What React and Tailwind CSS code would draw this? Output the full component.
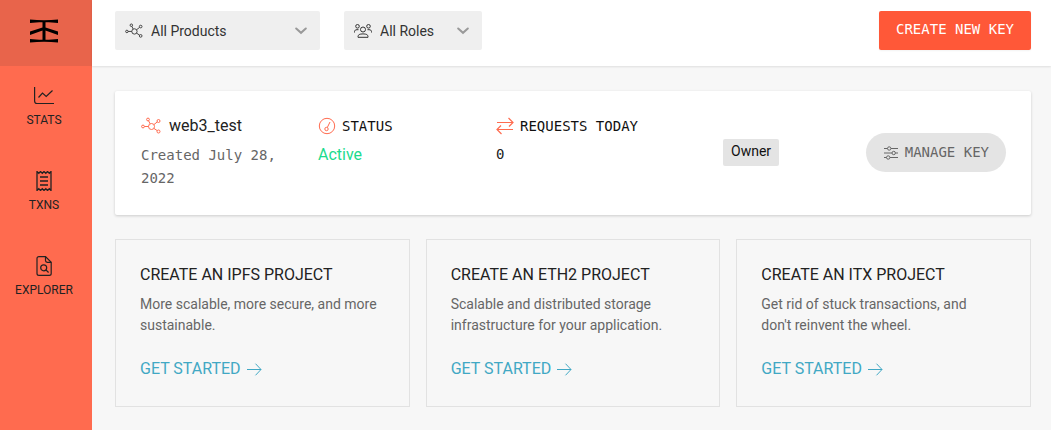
import { clsx } from "clsx";

const sans = "font-[Roboto,'Liberation_Sans',sans-serif]";
const mono = "font-['DejaVu_Sans_Mono','Liberation_Mono',monospace]";

function NetworkIcon({ className }) {
  return <svg className={className} viewBox="0 0 20 18" fill="none" stroke="currentColor" aria-hidden="true">
    <circle cx="10.5" cy="9.5" r="3"/>
    <circle cx="2" cy="9.5" r="1.4"/>
    <circle cx="7" cy="2.5" r="1.4"/>
    <circle cx="17.5" cy="4" r="1.5"/>
    <circle cx="17.5" cy="14.5" r="1.5"/>
    <path d="M3.4 9.5h4.1M7.6 3.8l1.5 3M12.9 7.6l3.3-2.6M12.9 11.4l3.3 2.2"/>
  </svg>;
}

function PeopleIcon({ className }) {
  return <svg className={className} viewBox="0 0 18 14" fill="none" stroke="currentColor" aria-hidden="true">
    <circle cx="3.5" cy="2.3" r="1.8"/>
    <circle cx="14.5" cy="2.3" r="1.8"/>
    <circle cx="9" cy="5.5" r="2.5"/>
    <path d="M.5 8.5V7.6C.5 6.4 1.5 5.7 3 5.7h1.5M17.5 8.5V7.6c0-1.2-1-1.9-2.5-1.9h-1.5M4 13.3v-.8c0-1.700 1.500-2.600 5-2.600s5 .9 5 2.600v.8z"/>
  </svg>;
}

function GaugeIcon({ className }) {
  return <svg className={className} viewBox="0 0 18 18" fill="none" stroke="currentColor" aria-hidden="true">
    <circle cx="9" cy="9" r="7.7"/>
    <circle cx="8.5" cy="12" r="1.7"/>
    <path d="M9.3 10.5L12 5"/>
  </svg>;
}

function SwapIcon({ className }) {
  return <svg className={className} viewBox="0 0 18 18" fill="none" stroke="currentColor" strokeWidth="1.2" aria-hidden="true">
    <path d="M1 5.5h16M12.5 1l4.5 4.500-4 4M17 12.500H1M5 8.500l-4 4L5.500 17"/>
  </svg>;
}

function SlidersIcon({ className }) {
  return <svg className={className} viewBox="0 0 16 14" fill="none" stroke="currentColor" aria-hidden="true">
    <path d="M1 2.500h3.500M8 2.500h7M1 7h8M12.500 7H15M1 11.500h2.500M7 11.500h8"/>
    <circle cx="6.2" cy="2.5" r="1.7"/>
    <circle cx="10.7" cy="7" r="1.7"/>
    <circle cx="5.2" cy="11.5" r="1.7"/>
  </svg>;
}

function ArrowIcon({ className }) {
  return <svg className={className} viewBox="0 0 15 13" fill="none" stroke="currentColor" aria-hidden="true">
    <path d="M0 6.500h14M8.500.7l5.500 5.800-5.500 5.800"/>
  </svg>;
}

function ChevronIcon({ className }) {
  return <svg className={className} viewBox="0 0 12 8" fill="none" stroke="currentColor" strokeWidth="2" strokeLinecap="round" aria-hidden="true">
    <path d="M1.200 1.500L6 5.800l4.800-4.300"/>
  </svg>;
}

function StatsIcon() {
  return <svg className="h-5 w-5" viewBox="0 0 20 20" fill="none" stroke="currentColor" strokeWidth="1.2" aria-hidden="true">
    <path d="M.6 1v14c0 1.700.8 2.500 2.400 2.500h17"/>
    <path d="M4.500 11.500l4-4.500 3.700 3.500 6.300-6"/>
  </svg>;
}

function ReceiptIcon() {
  return <svg className="h-5 w-5" viewBox="0 0 20 20" fill="none" stroke="currentColor" strokeWidth="1.3" aria-hidden="true">
    <path d="M3 .5v19l1.800-1.800 1.700 1.800 1.800-1.800 1.700 1.800 1.800-1.800 1.700 1.800 1.800-1.800L17 19.500V.5l-1.700 1.800L13.500.5l-1.700 1.800L10 .5 8.300 2.300 6.500.5 4.800 2.300z"/>
    <path d="M6 6h8M6 10h8M6 14h8"/>
  </svg>;
}

function FileSearchIcon() {
  return <svg className="h-5 w-5" viewBox="0 0 20 20" fill="none" stroke="currentColor" strokeWidth="1.2" aria-hidden="true">
    <path d="M11.500.6H5C3.700.6 3 1.300 3 2.500v15c0 1.200.7 1.900 2 1.900h10.300c1.200 0 1.900-.7 1.900-1.900V6.300z"/>
    <path d="M11.500.6v4c0 1.100.6 1.700 1.700 1.700h4"/>
    <circle cx="9.7" cy="11.8" r="3"/>
    <path d="M12 14l2.600 2.500"/>
  </svg>;
}

function Logo() {
  return <svg className="h-6 w-7" viewBox="0 0 28 24" fill="currentColor" aria-hidden="true">
    <path d="M0 .5c9 1 19 1 28 0V4c-4-.5-8-.8-12.500-.8v5.300L28 12.500V16l-12.500-4.500v9.300c4.500 0 8.500-.3 12.500-.8v3.500c-9-1-19-1-28 0V20c4 .5 8 .8 12.500.8v-9.300L0 16v-3.500l12.500-4V3.200C8 3.200 4 3.500 0 4z"/>
  </svg>;
}

const nav = [
  { label: "STATS", icon: StatsIcon },
  { label: "TXNS", icon: ReceiptIcon },
  { label: "EXPLORER", icon: FileSearchIcon },
];

const projects = [
  { title: "CREATE AN IPFS PROJECT", text: "More scalable, more secure, and more sustainable." },
  { title: "CREATE AN ETH2 PROJECT", text: "Scalable and distributed storage infrastructure for your application." },
  { title: "CREATE AN ITX PROJECT", text: "Get rid of stuck transactions, and don't reinvent the wheel." },
];

function Filter({ label, option, icon: Icon, className }) {
  return <div className={clsx("relative text-[#333]", className)}>
    <Icon className="absolute left-2.5 top-3 h-4 w-[18px] pointer-events-none"/>
    <select aria-label={label} className="w-full h-[39px] pl-9 pr-8 rounded-xs bg-[#efefef] appearance-none text-[14px] leading-5">
      <option>{option}</option>
    </select>
    <ChevronIcon className="absolute right-[13px] top-4 h-2 w-3 text-[#999] pointer-events-none"/>
  </div>;
}

function Sidebar() {
  return <aside className="w-[92px] shrink-0 bg-[#ff6b4f]">
    <a href="#home" aria-label="Home" className="flex h-[66px] items-center justify-center bg-[#e8644b] pb-1 pr-1 text-black">
      <Logo/>
    </a>
    <nav className="flex flex-col gap-[43px] pt-5 pr-1">
      {nav.map(({ label, icon: Icon }) => <a key={label} href={`#${label.toLowerCase()}`} className="flex flex-col items-center gap-1.5 text-[#222]">
        <Icon/>
        <span className="text-[12px] leading-4">{label}</span>
      </a>)}
    </nav>
  </aside>;
}

function KeyCard() {
  return <section className="grid grid-cols-[177fr_178fr_227fr_283fr] rounded-xs bg-white pl-[26px] pr-[25px] pt-6 pb-[25px] shadow-[0_1px_3px_rgba(0,0,0,0.18)]">
    <div className="pr-8">
      <h2 className="flex items-center gap-2 text-[16px] leading-[22px] text-[#222]">
        <NetworkIcon className="h-[18px] w-5 text-[#ff6b4f]"/>
        web3_test
      </h2>
      <p className={clsx(mono, "mt-[7px] text-[14px] leading-[23px] text-[#666]")}>Created July 28, 2022</p>
    </div>
    <div>
      <h3 className={clsx(mono, "flex items-center gap-1.5 text-[14px] leading-[22px] text-[#111]")}>
        <GaugeIcon className="h-[18px] w-[18px] text-[#ff6b4f]"/>
        STATUS
      </h3>
      <p className="mt-1.5 text-[16px] leading-[23px] text-[#1bdb8d]">Active</p>
    </div>
    <div>
      <h3 className={clsx(mono, "flex items-center gap-1.5 text-[14px] leading-[22px] text-[#111]")}>
        <SwapIcon className="h-[18px] w-[18px] text-[#ff6b4f]"/>
        REQUESTS TODAY
      </h3>
      <p className={clsx(mono, "mt-1.5 text-[14px] leading-[23px] text-[#222]")}>0</p>
    </div>
    <div className="flex items-center justify-between">
      <span className="rounded-xs bg-[#e4e4e4] px-2 pt-0.5 pb-1 text-[14px] leading-[21px] text-[#111]">Owner</span>
      <button className={clsx(mono, "flex h-[39px] items-center gap-1.5 rounded-full bg-[#e4e4e4] px-[17px] text-[14px] text-[#666]")}>
        <SlidersIcon className="h-3.5 w-4"/>
        MANAGE KEY
      </button>
    </div>
  </section>;
}

function ProjectCard({ title, text }) {
  return <article className="border border-[#e2e2e2] px-6 pt-6 pb-[26px]">
    <h3 className="text-[16px] leading-[22px] text-[#222]">{title}</h3>
    <p className="mt-2 pr-2 text-[14px] leading-[21px] text-[#666]">{text}</p>
    <a href="#start" className="mt-[22px] flex items-center gap-1.5 text-[16px] leading-[22px] text-[#41a8c4]">
      GET STARTED
      <ArrowIcon className="h-[13px] w-[15px]"/>
    </a>
  </article>;
}

export default function App() {
  return <div className={clsx(sans, "flex min-h-screen bg-[#f7f7f7]")}>
    <Sidebar/>
    <div className="flex-1 min-w-0">
      <header className="flex h-[66px] items-start gap-6 bg-white pt-[11px] pl-[23px] pr-5 shadow-[0_1px_2px_rgba(0,0,0,0.1)]">
        <Filter label="Product" option="All Products" icon={NetworkIcon} className="w-[205px]"/>
        <Filter label="Role" option="All Roles" icon={PeopleIcon} className="w-[138px]"/>
        <button className={clsx(mono, "ml-auto h-[39px] rounded-xs bg-[#ff5838] px-[17px] pb-0.5 text-[14px] text-white shadow-xs")}>CREATE NEW KEY</button>
      </header>
      <main className="flex flex-col gap-6 pt-[25px] pl-[23px] pr-5 pb-6">
        <KeyCard/>
        <div className="grid grid-cols-3 gap-4">
          {projects.map((p) => <ProjectCard key={p.title} title={p.title} text={p.text}/>)}
        </div>
      </main>
    </div>
  </div>;
}
